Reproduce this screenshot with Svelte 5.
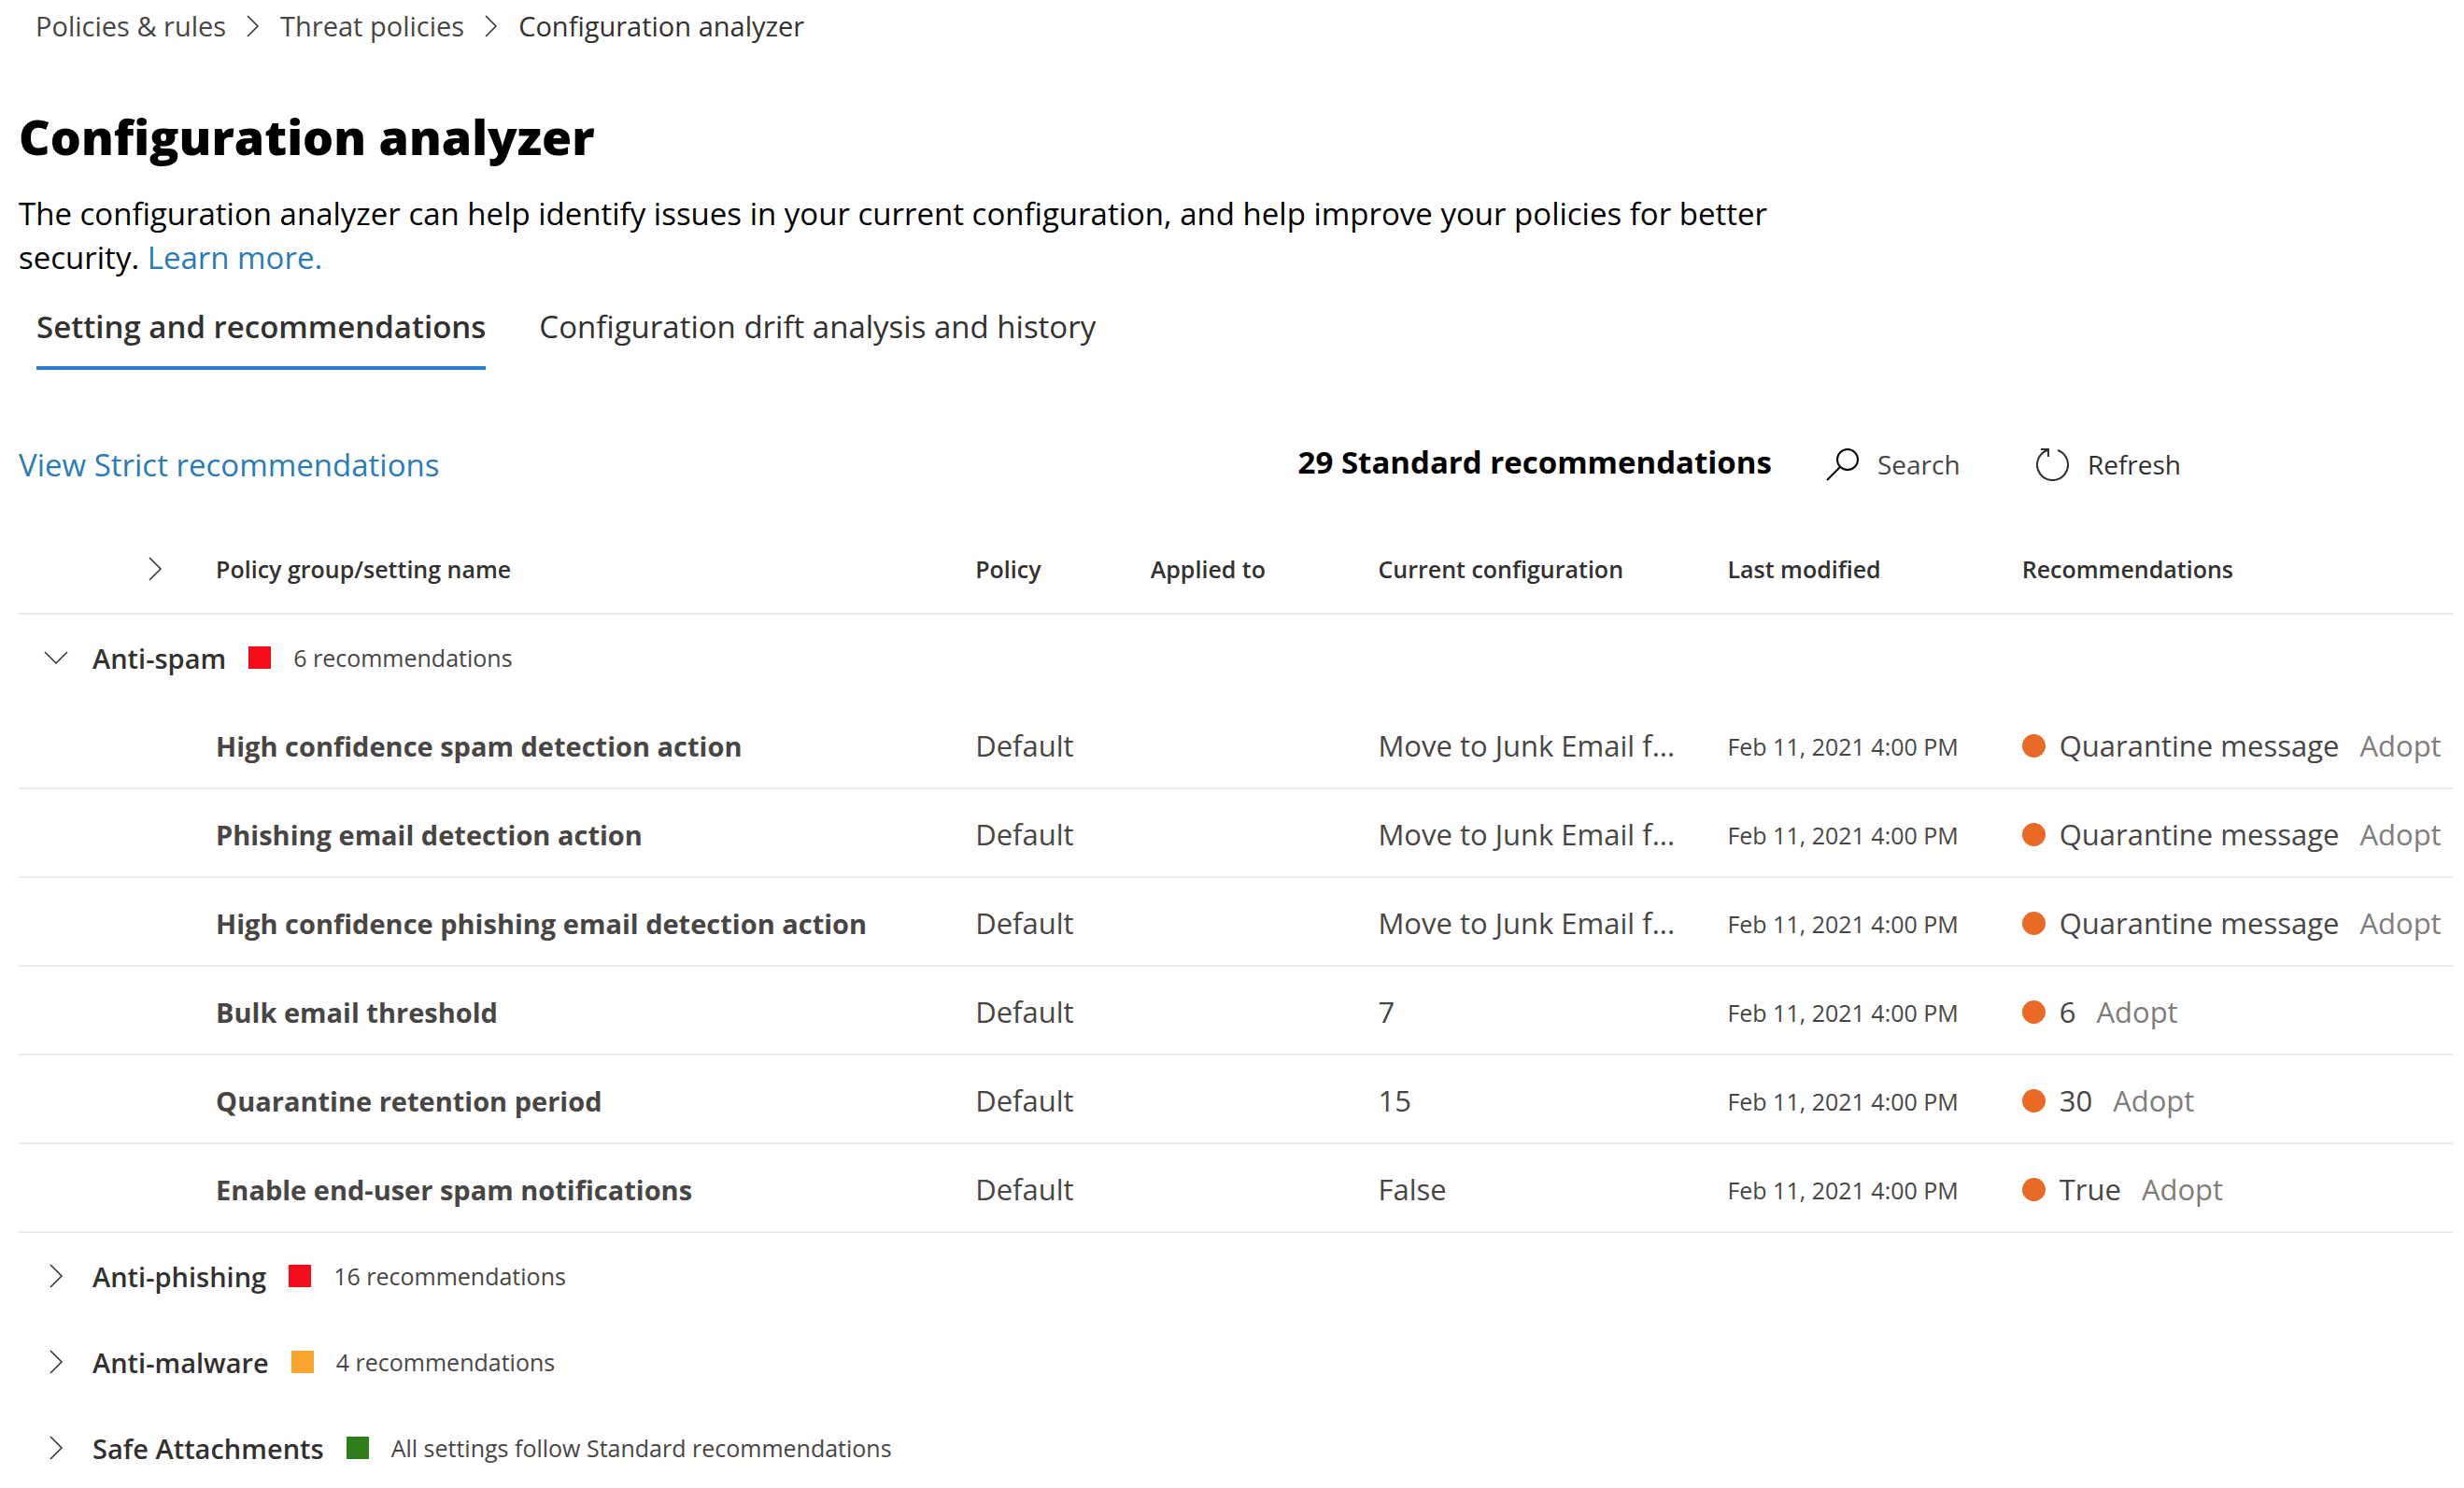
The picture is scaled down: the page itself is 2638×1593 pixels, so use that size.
<script>
  const crumbs = ['Policies & rules', 'Threat policies', 'Configuration analyzer'];
  const columns = ['Policy group/setting name', 'Policy', 'Applied to', 'Current configuration', 'Last modified', 'Recommendations'];
  const date = 'Feb 11, 2021 4:00 PM';
  const junk = 'Move to Junk Email f...';

  let tab = $state(0);
  let query = $state('');
  let groups = $state([
    {
      name: 'Anti-spam',
      level: 'high',
      note: '6 recommendations',
      open: true,
      rows: [
        { name: 'High confidence spam detection action', current: junk, advice: 'Quarantine message' },
        { name: 'Phishing email detection action', current: junk, advice: 'Quarantine message' },
        { name: 'High confidence phishing email detection action', current: junk, advice: 'Quarantine message' },
        { name: 'Bulk email threshold', current: '7', advice: '6' },
        { name: 'Quarantine retention period', current: '15', advice: '30' },
        { name: 'Enable end-user spam notifications', current: 'False', advice: 'True' }
      ]
    },
    { name: 'Anti-phishing', level: 'high', note: '16 recommendations', open: false, rows: [] },
    { name: 'Anti-malware', level: 'medium', note: '4 recommendations', open: false, rows: [] },
    { name: 'Safe Attachments', level: 'ok', note: 'All settings follow Standard recommendations', open: false, rows: [] }
  ]);
</script>

{#snippet chevron(open)}
  <svg class="chevron" class:open viewBox="0 0 28 28" aria-hidden="true">
    <path d="M8 2 L20 14 L8 26" />
  </svg>
{/snippet}

<div class="page">
  <nav class="crumbs" aria-label="Breadcrumb">
    {#each crumbs as crumb, i}
      {#if i > 0}
        <svg class="sep" viewBox="0 0 14 24" aria-hidden="true"><path d="M1 1 L12 12 L1 23" /></svg>
      {/if}
      <a href="#top" class:current={i === crumbs.length - 1}>{crumb}</a>
    {/each}
  </nav>

  <main>
    <h1>Configuration analyzer</h1>
    <p class="intro">
      The configuration analyzer can help identify issues in your current configuration, and help improve your policies for better security.
      <a href="#learn">Learn more.</a>
    </p>

    <div class="tabs" role="tablist">
      <button role="tab" aria-selected={tab === 0} onclick={() => (tab = 0)}>Setting and recommendations</button>
      <button role="tab" aria-selected={tab === 1} onclick={() => (tab = 1)}>Configuration drift analysis and history</button>
    </div>

    <div class="toolbar">
      <a class="strict" href="#strict">View Strict recommendations</a>
      <h2>29 Standard recommendations</h2>
      <label class="search">
        <svg viewBox="0 0 36 36" aria-hidden="true">
          <circle cx="23" cy="13" r="11" />
          <path d="M15 21 L1 35" />
        </svg>
        <input type="text" aria-label="Search" placeholder="Search" bind:value={query} />
      </label>
      <button class="refresh">
        <svg viewBox="0 0 36 36" aria-hidden="true">
          <path d="M23 3 A16.5 16.5 0 1 1 12 3" />
          <path d="M5 2 H13 V10" />
        </svg>
        Refresh
      </button>
    </div>

    <table>
      <colgroup>
        <col class="c-toggle" /><col class="c-name" /><col class="c-policy" /><col class="c-applied" />
        <col class="c-current" /><col class="c-date" /><col class="c-advice" />
      </colgroup>
      <thead>
        <tr>
          <th class="toggle"><button aria-label="Expand all">{@render chevron(false)}</button></th>
          {#each columns as column}<th scope="col">{column}</th>{/each}
        </tr>
      </thead>
      <tbody>
        {#each groups as group}
          <tr class="group">
            <td colspan="7">
              <div class="group-line">
                <button aria-expanded={group.open} onclick={() => (group.open = !group.open)}>
                  {@render chevron(group.open)}
                  {group.name}
                </button>
                <span class="square {group.level}"></span>
                <span class="note">{group.note}</span>
              </div>
            </td>
          </tr>
          {#if group.open}
            {#each group.rows as row}
              <tr class="setting">
                <td></td>
                <td class="name">{row.name}</td>
                <td>Default</td>
                <td></td>
                <td>{row.current}</td>
                <td class="date">{date}</td>
                <td>
                  <div class="advice">
                    <span class="dot"></span>
                    <span>{row.advice}</span>
                    <button>Adopt</button>
                  </div>
                </td>
              </tr>
            {/each}
          {/if}
        {/each}
      </tbody>
    </table>
  </main>
</div>

<style>
  :global(body) {
    background: #fff;
  }
  .page {
    font-family: 'Open Sans', 'Noto Sans', sans-serif;
    color: #484644;
    overflow: hidden;
  }
  button,
  input {
    font: inherit;
    color: inherit;
    background: none;
    border: 0;
    padding: 0;
    margin: 0;
    cursor: pointer;
  }
  a {
    text-decoration: none;
    color: #2b7bb9;
  }
  svg {
    fill: none;
    stroke: #323130;
    stroke-width: 2;
    flex: none;
  }
  .crumbs {
    display: flex;
    align-items: center;
    gap: 22px;
    padding: 6px 38px 0;
    font-size: 29px;
    line-height: 44px;
  }
  .crumbs a {
    color: #484644;
  }
  .crumbs a.current {
    color: #323130;
  }
  .sep {
    width: 14px;
    height: 24px;
    stroke-width: 1.5;
  }
  main {
    padding: 0 12px 0 20px;
  }
  h1 {
    margin: 58px 0 0;
    font-size: 52px;
    line-height: 76px;
    font-weight: 800;
    color: #000;
  }
  .intro {
    margin: 21px 0 0;
    max-width: 1900px;
    font-size: 33px;
    line-height: 47px;
    color: #000;
  }
  .tabs {
    display: flex;
    gap: 57px;
    padding: 0 19px;
    margin-top: 24px;
    font-size: 33px;
    line-height: 54px;
    color: #323130;
  }
  .tabs button {
    padding-bottom: 15px;
    border-bottom: 4px solid transparent;
  }
  .tabs button[aria-selected='true'] {
    font-weight: 600;
    border-bottom-color: #2b7cd3;
  }
  .toolbar {
    display: flex;
    align-items: center;
    margin-top: 72px;
    padding-right: 291px;
    line-height: 54px;
  }
  .strict {
    padding-top: 2px;
    font-size: 33px;
  }
  h2 {
    margin: 0 58px 0 auto;
    padding-bottom: 4px;
    font-size: 33px;
    line-height: 54px;
    font-weight: 700;
    color: #000;
  }
  .search,
  .refresh {
    display: flex;
    align-items: center;
    gap: 19px;
    font-size: 28px;
  }
  .search svg,
  .refresh svg {
    width: 36px;
    height: 36px;
  }
  .search svg {
    stroke: #000;
  }
  .search input {
    width: 170px;
    outline: 0;
  }
  .search input::placeholder {
    color: #484644;
    opacity: 1;
  }
  .refresh {
    color: #323130;
  }
  table {
    width: 100%;
    margin-top: 35px;
    table-layout: fixed;
    border-collapse: collapse;
  }
  .c-toggle { width: 8.1%; }
  .c-name { width: 31.2%; }
  .c-policy { width: 7.2%; }
  .c-applied { width: 9.35%; }
  .c-current { width: 14.35%; }
  .c-date { width: 12.1%; }
  .c-advice { width: 17.7%; }
  th,
  td {
    padding: 0;
    text-align: left;
    white-space: nowrap;
  }
  th {
    height: 95px;
    font-size: 25px;
    font-weight: 600;
    color: #323130;
    border-bottom: 2px solid #e8e8e8;
  }
  .toggle button {
    display: block;
    margin-left: 132px;
  }
  .chevron {
    display: block;
    width: 28px;
    height: 28px;
    stroke-width: 1.5;
  }
  .chevron.open {
    transform: rotate(90deg);
  }
  .group td {
    height: 92px;
  }
  .group-line {
    display: flex;
    align-items: center;
    gap: 24px;
    padding-left: 26px;
  }
  .group-line button {
    display: flex;
    align-items: center;
    gap: 25px;
    font-size: 29px;
    font-weight: 600;
    color: #323130;
  }
  .square {
    width: 24px;
    height: 24px;
  }
  .high { background: #f40d1a; }
  .medium { background: #f7a52d; }
  .ok { background: #2d7d1a; }
  .note {
    font-size: 25px;
  }
  .setting td {
    height: 90px;
    padding-top: 3px;
    font-size: 31px;
    border-bottom: 2px solid #ececec;
  }
  .setting .name {
    font-size: 29px;
    font-weight: 700;
  }
  .setting .date {
    height: 88px;
    padding-top: 5px;
    font-size: 25px;
  }
  .advice {
    display: flex;
    align-items: center;
  }
  .advice button {
    margin-left: 22px;
    color: #7f7d7b;
  }
  .dot {
    width: 25px;
    height: 25px;
    margin-right: 15px;
    border-radius: 50%;
    background: #e96a24;
  }
</style>
